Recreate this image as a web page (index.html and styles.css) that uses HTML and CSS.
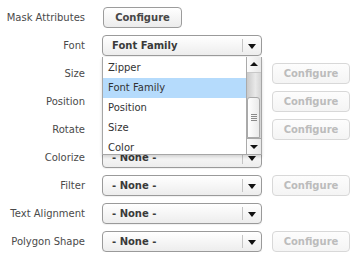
FILE: index.html
```html
<!DOCTYPE html>
<html lang="en">
<head>
  <meta charset="UTF-8">
  <title>Mask Attributes</title>
  <link rel="stylesheet" href="styles.css">
</head>
<body>
  <div class="form">
    <div class="row">
      <span class="label">Mask Attributes</span>
      <button class="btn">Configure</button>
    </div>

    <!-- Font row with open dropdown -->
    <div class="row">
      <span class="label">Font</span>
      <div class="select open">
        <span class="value">Font Family</span>
        <span class="arrow"></span>
        <div class="list">
          <div class="item">Zipper</div>
          <div class="item selected">Font Family</div>
          <div class="item">Position</div>
          <div class="item">Size</div>
          <div class="item">Color</div>
          <div class="scrollbar">
            <div class="sb-btn up"></div>
            <div class="sb-track">
              <div class="sb-thumb"><span class="grip"></span></div>
            </div>
            <div class="sb-btn down"></div>
          </div>
        </div>
      </div>
    </div>

    <!-- these three selects sit under the open list -->
    <div class="row">
      <span class="label">Size</span>
      <div class="select"><span class="value"></span><span class="arrow"></span></div>
      <button class="btn disabled">Configure</button>
    </div>
    <div class="row">
      <span class="label">Position</span>
      <div class="select"><span class="value"></span><span class="arrow"></span></div>
      <button class="btn disabled">Configure</button>
    </div>
    <div class="row">
      <span class="label">Rotate</span>
      <div class="select"><span class="value"></span><span class="arrow"></span></div>
      <button class="btn disabled">Configure</button>
    </div>
    <div class="row">
      <span class="label">Colorize</span>
      <div class="select"><span class="value">- None -</span><span class="arrow"></span></div>
    </div>
    <div class="row">
      <span class="label">Filter</span>
      <div class="select"><span class="value">- None -</span><span class="arrow"></span></div>
      <button class="btn disabled">Configure</button>
    </div>
    <div class="row">
      <span class="label">Text Alignment</span>
      <div class="select"><span class="value">- None -</span><span class="arrow"></span></div>
    </div>
    <div class="row">
      <span class="label">Polygon Shape</span>
      <div class="select"><span class="value">- None -</span><span class="arrow"></span></div>
      <button class="btn disabled">Configure</button>
    </div>
  </div>
</body>
</html>
```

FILE: styles.css
```css
body {
  margin: 0;
  background: #fff;
  font-family: "DejaVu Sans", Verdana, sans-serif;
  font-size: 10px;
  color: #444;
}

.form {
  display: flex;
  flex-direction: column;
  gap: 7px;
  padding-top: 7px;
}

.row {
  display: flex;
  align-items: center;
  height: 21px;
}

.label {
  width: 85px;
  margin-right: 17px;
  text-align: right;
  color: #4a4a4a;
}

/* Buttons */
.btn {
  box-sizing: border-box;
  height: 21px;
  width: 79px;
  margin-left: 1px;
  padding: 0;
  border: 1px solid #9c9c9c;
  border-radius: 4px;
  background: linear-gradient(#ffffff, #ececec);
  font-family: inherit;
  font-size: 10px;
  font-weight: bold;
  color: #474747;
}
.btn.disabled {
  width: 78px;
  margin-left: 10px;
  border-color: #d8d8d8;
  background: linear-gradient(#fdfdfd, #f4f4f4);
  color: #bcbcbc;
}

/* Select boxes */
.select {
  position: relative;
  box-sizing: border-box;
  width: 160px;
  height: 21px;
  display: flex;
  align-items: center;
  border: 1px solid #9a9a9a;
  border-radius: 4px;
  background: linear-gradient(#ffffff, #ededed);
  box-shadow: 0 1px 1px rgba(0,0,0,0.06);
}
.select .value {
  flex: 1;
  padding-left: 9px;
  font-weight: bold;
  color: #3a3a3a;
}
.select .arrow {
  position: relative;
  width: 19px;
  height: 100%;
}
.select .arrow::before {
  content: "";
  position: absolute;
  left: 0;
  top: 3px;
  bottom: 3px;
  border-left: 1px solid #c4c4c4;
}
.select .arrow::after {
  content: "";
  position: absolute;
  left: 6px;
  top: 8px;
  border-left: 4px solid transparent;
  border-right: 4px solid transparent;
  border-top: 5px solid #111;
}
.select.open {
  z-index: 5;
}

/* Open dropdown list */
.list {
  position: absolute;
  top: 21px;
  left: -1px;
  width: 160px;
  height: 98px;
  box-sizing: border-box;
  padding-top: 1px;
  overflow: hidden;
  background: #fff;
  border: 1px solid #a6a6a6;
  border-top: none;
  box-shadow: 0 2px 3px rgba(0,0,0,0.15);
}
.item {
  height: 20px;
  line-height: 20px;
  padding-left: 5px;
  margin-right: 15px;
  font-size: 10px;
  color: #333;
}
.item.selected {
  background: #b5dbfc;
}

/* Scrollbar drawn by hand */
.scrollbar {
  position: absolute;
  top: 0;
  right: 0;
  bottom: 0;
  width: 15px;
  box-sizing: border-box;
  border-left: 1px solid #aaa;
  display: flex;
  flex-direction: column;
  background: #f2f2f2;
}
.sb-btn {
  position: relative;
  height: 15px;
  background: linear-gradient(to right, #fbfbfb, #e8e8e8);
}
.sb-btn.up {
  border-bottom: 1px solid #c8c8c8;
}
.sb-btn.down {
  border-top: 1px solid #a8a8a8;
}
.sb-btn::after {
  content: "";
  position: absolute;
  left: 3px;
  border-left: 4px solid transparent;
  border-right: 4px solid transparent;
}
.sb-btn.up::after {
  top: 5px;
  border-bottom: 4px solid #111;
}
.sb-btn.down::after {
  top: 6px;
  border-top: 4px solid #111;
}
.sb-track {
  flex: 1;
  display: flex;
  flex-direction: column;
  justify-content: flex-end;
  background: linear-gradient(to right, #c9c9c9, #e9e9e9 60%, #d4d4d4);
}
.sb-thumb {
  height: 41px;
  margin: 0 1px 0 0;
  box-sizing: border-box;
  border: 1px solid #a9a9a9;
  border-radius: 3px 3px 0 0;
  background: linear-gradient(to right, #ffffff, #eaeaea);
  display: flex;
  align-items: center;
  justify-content: center;
}
.grip {
  width: 6px;
  height: 7px;
  background: repeating-linear-gradient(#8a8a8a 0 1px, transparent 1px 2px);
}
```
